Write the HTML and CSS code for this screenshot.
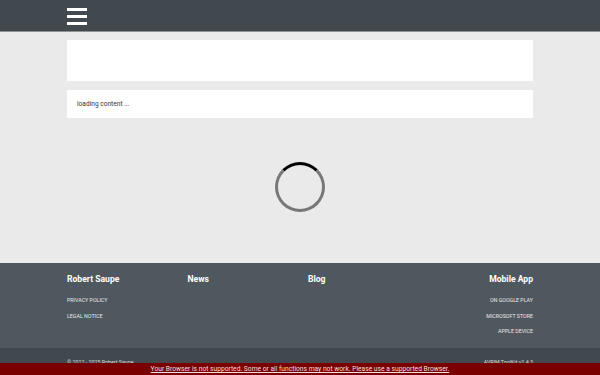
FILE: index.html
```html
<!DOCTYPE html>
<html lang="en">
<head>
    <meta charset="UTF-8">
    <meta name="viewport" content="width=device-width, initial-scale=1.0">
    <title>AVRIM ToolKit</title>
    <link rel="stylesheet" href="styles.css">
</head>
<body>
    <header class="topbar">
        <div class="wrap">
            <button class="menu-btn" aria-label="Menu">
                <span></span><span></span><span></span>
            </button>
        </div>
    </header>

    <main class="content wrap">
        <div class="card card-top"></div>
        <div class="card card-status">loading content ...</div>
        <div class="spinner-box">
            <div class="spinner"></div>
        </div>
    </main>

    <footer>
        <div class="footer-main">
            <div class="wrap footer-grid">
                <div class="col">
                    <h3>Robert Saupe</h3>
                    <a href="#">Privacy Policy</a>
                    <a href="#">Legal Notice</a>
                </div>
                <div class="col">
                    <h3>News</h3>
                </div>
                <div class="col">
                    <h3>Blog</h3>
                </div>
                <div class="col right">
                    <h3>Mobile App</h3>
                    <a href="#">On Google Play</a>
                    <a href="#">Microsoft Store</a>
                    <a href="#">Apple Device</a>
                </div>
            </div>
        </div>
        <div class="footer-bottom">
            <div class="wrap bottom-row">
                <span>&copy; 2012 - 2025 Robert Saupe</span>
                <span>AVRIM ToolKit v2.4.3</span>
            </div>
        </div>
    </footer>

    <div class="browser-warning">
        <a href="#">Your Browser is not supported. Some or all functions may not work. Please use a supported Browser.</a>
    </div>
</body>
</html>
```

FILE: styles.css
```css
:root {
    --header: #41484e;
    --footer: #50585f;
    --bg: #eaeaea;
    --warn: #7a0000;
}

* {
    box-sizing: border-box;
}

body {
    margin: 0;
    font-family: Roboto, 'Liberation Sans', sans-serif;
    background-color: var(--bg);
    color: #333;
}

.wrap {
    width: 466px;
    margin: 0 auto;
}

.topbar {
    height: 32px;
    padding-top: 8px;
    background-color: var(--header);
    border-bottom: 1px solid #8d9396;
}

.menu-btn {
    display: flex;
    flex-direction: column;
    gap: 4px;
    width: 20px;
    padding: 0;
    border: none;
    background: none;
    cursor: pointer;
}

.menu-btn span {
    display: block;
    height: 3px;
    background-color: #fff;
}

.content {
    padding-top: 8px;
    height: 231px;
}

.card {
    background-color: #fff;
}

.card-top {
    height: 41px;
    margin-bottom: 9px;
}

.card-status {
    height: 28px;
    padding: 0 10px;
    display: flex;
    align-items: center;
    font-size: 6.6px;
    color: #333;
}

.spinner-box {
    display: flex;
    justify-content: center;
    margin-top: 44px;
}

.spinner {
    width: 50px;
    height: 50px;
    border-radius: 50%;
    border: 3px solid #777;
    border-top-color: #000;
}

.footer-main {
    background-color: var(--footer);
    height: 85px;
    padding-top: 10px;
}

.footer-grid {
    display: grid;
    grid-template-columns: repeat(4, 1fr);
    gap: 16px;
}

.col {
    display: flex;
    flex-direction: column;
}

.col.right {
    align-items: flex-end;
}

.col h3 {
    margin: 0 0 8px;
    font-size: 8.6px;
    line-height: 12px;
    font-weight: 700;
    color: #fff;
}

.col a {
    font-size: 5.3px;
    line-height: 15.5px;
    text-transform: uppercase;
    text-decoration: none;
    color: #e8e8e8;
}

.footer-bottom {
    background-color: var(--header);
    height: 27px;
    padding-top: 10px;
}

.bottom-row {
    display: flex;
    justify-content: space-between;
    font-size: 5.3px;
    line-height: 8px;
    color: #ddd;
}

.browser-warning {
    position: fixed;
    left: 0;
    right: 0;
    bottom: 0;
    height: 12px;
    background-color: var(--warn);
    text-align: center;
    font-size: 6.7px;
    line-height: 12px;
}

.browser-warning a {
    color: #f2dede;
}
```
